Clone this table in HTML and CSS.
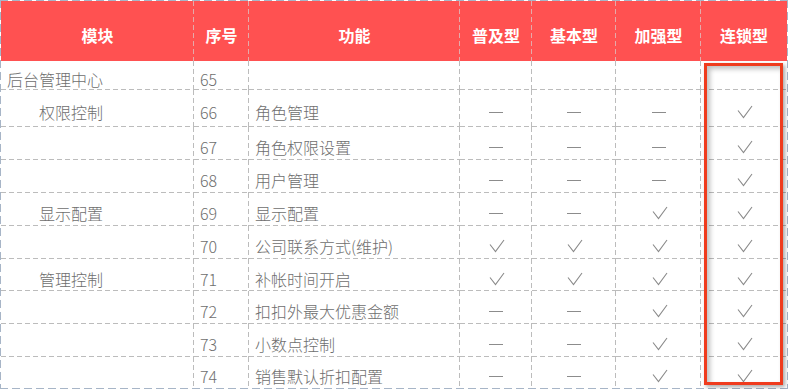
FILE: index.html
```html
<!DOCTYPE html>
<html lang="zh-CN">
<head>
<meta charset="utf-8">
<title>功能对比</title>
<link rel="stylesheet" href="styles.css">
</head>
<body>
<div class="frame">
  <div class="grid">
    <div class="c th">模块</div>
    <div class="c th">序号</div>
    <div class="c th">功能</div>
    <div class="c th">普及型</div>
    <div class="c th">基本型</div>
    <div class="c th">加强型</div>
    <div class="c th last-col">连锁型</div>

    <div class="c">后台管理中心</div>
    <div class="c">65</div>
    <div class="c"></div>
    <div class="c mid"></div>
    <div class="c mid"></div>
    <div class="c mid"></div>
    <div class="c mid last-col"></div>

    <div class="c sub">权限控制</div>
    <div class="c">66</div>
    <div class="c">角色管理</div>
    <div class="c mid"><span class="no"></span></div>
    <div class="c mid"><span class="no"></span></div>
    <div class="c mid"><span class="no"></span></div>
    <div class="c mid last-col"><svg class="ok" viewBox="0 0 16 14"><polyline points="1,5.5 6.5,12.5 15,1"/></svg></div>

    <div class="c sub"></div>
    <div class="c">67</div>
    <div class="c">角色权限设置</div>
    <div class="c mid"><span class="no"></span></div>
    <div class="c mid"><span class="no"></span></div>
    <div class="c mid"><span class="no"></span></div>
    <div class="c mid last-col"><svg class="ok" viewBox="0 0 16 14"><polyline points="1,5.5 6.5,12.5 15,1"/></svg></div>

    <div class="c sub"></div>
    <div class="c">68</div>
    <div class="c">用户管理</div>
    <div class="c mid"><span class="no"></span></div>
    <div class="c mid"><span class="no"></span></div>
    <div class="c mid"><span class="no"></span></div>
    <div class="c mid last-col"><svg class="ok" viewBox="0 0 16 14"><polyline points="1,5.5 6.5,12.5 15,1"/></svg></div>

    <div class="c sub">显示配置</div>
    <div class="c">69</div>
    <div class="c">显示配置</div>
    <div class="c mid"><span class="no"></span></div>
    <div class="c mid"><span class="no"></span></div>
    <div class="c mid"><svg class="ok" viewBox="0 0 16 14"><polyline points="1,5.5 6.5,12.5 15,1"/></svg></div>
    <div class="c mid last-col"><svg class="ok" viewBox="0 0 16 14"><polyline points="1,5.5 6.5,12.5 15,1"/></svg></div>

    <div class="c sub"></div>
    <div class="c">70</div>
    <div class="c">公司联系方式(维护)</div>
    <div class="c mid"><svg class="ok" viewBox="0 0 16 14"><polyline points="1,5.5 6.5,12.5 15,1"/></svg></div>
    <div class="c mid"><svg class="ok" viewBox="0 0 16 14"><polyline points="1,5.5 6.5,12.5 15,1"/></svg></div>
    <div class="c mid"><svg class="ok" viewBox="0 0 16 14"><polyline points="1,5.5 6.5,12.5 15,1"/></svg></div>
    <div class="c mid last-col"><svg class="ok" viewBox="0 0 16 14"><polyline points="1,5.5 6.5,12.5 15,1"/></svg></div>

    <div class="c sub">管理控制</div>
    <div class="c">71</div>
    <div class="c">补帐时间开启</div>
    <div class="c mid"><svg class="ok" viewBox="0 0 16 14"><polyline points="1,5.5 6.5,12.5 15,1"/></svg></div>
    <div class="c mid"><svg class="ok" viewBox="0 0 16 14"><polyline points="1,5.5 6.5,12.5 15,1"/></svg></div>
    <div class="c mid"><svg class="ok" viewBox="0 0 16 14"><polyline points="1,5.5 6.5,12.5 15,1"/></svg></div>
    <div class="c mid last-col"><svg class="ok" viewBox="0 0 16 14"><polyline points="1,5.5 6.5,12.5 15,1"/></svg></div>

    <div class="c sub"></div>
    <div class="c">72</div>
    <div class="c">扣扣外最大优惠金额</div>
    <div class="c mid"><span class="no"></span></div>
    <div class="c mid"><span class="no"></span></div>
    <div class="c mid"><svg class="ok" viewBox="0 0 16 14"><polyline points="1,5.5 6.5,12.5 15,1"/></svg></div>
    <div class="c mid last-col"><svg class="ok" viewBox="0 0 16 14"><polyline points="1,5.5 6.5,12.5 15,1"/></svg></div>

    <div class="c sub"></div>
    <div class="c">73</div>
    <div class="c">小数点控制</div>
    <div class="c mid"><span class="no"></span></div>
    <div class="c mid"><span class="no"></span></div>
    <div class="c mid"><svg class="ok" viewBox="0 0 16 14"><polyline points="1,5.5 6.5,12.5 15,1"/></svg></div>
    <div class="c mid last-col"><svg class="ok" viewBox="0 0 16 14"><polyline points="1,5.5 6.5,12.5 15,1"/></svg></div>

    <div class="c sub last-row"></div>
    <div class="c last-row">74</div>
    <div class="c last-row">销售默认折扣配置</div>
    <div class="c mid last-row"><span class="no"></span></div>
    <div class="c mid last-row"><span class="no"></span></div>
    <div class="c mid last-row"><svg class="ok" viewBox="0 0 16 14"><polyline points="1,5.5 6.5,12.5 15,1"/></svg></div>
    <div class="c mid last-row last-col"><svg class="ok" viewBox="0 0 16 14"><polyline points="1,5.5 6.5,12.5 15,1"/></svg></div>
  </div>
  <div class="highlight"></div>
</div>
</body>
</html>
```

FILE: styles.css
```css
html, body {
  margin: 0;
  padding: 0;
  background: #fff;
}

.frame {
  position: relative;
  width: 786px;
  padding: 1px;
  background:
    repeating-linear-gradient(90deg, #a7b5c7 0 8px, transparent 8px 12px) left top / 100% 1px no-repeat,
    repeating-linear-gradient(90deg, #a7b5c7 0 8px, transparent 8px 12px) left bottom / 100% 1px no-repeat,
    repeating-linear-gradient(180deg, #a7b5c7 0 8px, transparent 8px 12px) left top / 1px 100% no-repeat,
    repeating-linear-gradient(180deg, #a7b5c7 0 8px, transparent 8px 12px) right top / 1px 100% no-repeat;
}

.grid {
  display: grid;
  grid-template-columns: 193px 55px 211px 72px 84px 85px 86px;
  grid-template-rows: 60px 29px 37px 33px 33px 33px 33px 32px 33px 33px 31px;
  background: #fff;
  font-family: "Noto Sans CJK SC", "Noto Sans", sans-serif;
  font-size: 16px;
  font-weight: 300;
  color: #6e6e6e;
}

.c {
  box-sizing: border-box;
  display: flex;
  align-items: center;
  padding: 7px 0 0 6px;
  white-space: nowrap;
  line-height: 1;
  background-image:
    repeating-linear-gradient(90deg, #bcbcbc 0 5px, transparent 5px 8px),
    repeating-linear-gradient(180deg, #bcbcbc 0 5px, transparent 5px 8px);
  background-position: left bottom, right top;
  background-size: 100% 1px, 1px 100%;
  background-repeat: no-repeat;
}

.c.last-col {
  background-size: 100% 1px, 0 0;
}

.c.last-row {
  background-size: 0 0, 1px 100%;
}

.c.last-row.last-col {
  background-size: 0 0, 0 0;
}

.c.sub {
  padding-left: 38px;
}

.c.mid {
  justify-content: center;
  padding-left: 0;
}

.c.th {
  justify-content: center;
  padding-left: 0;
  background-color: #ff5151;
  background-image:
    repeating-linear-gradient(90deg, transparent 0 1px),
    repeating-linear-gradient(180deg, #e5a9a9 0 5px, transparent 5px 8px);
  color: #fff;
  font-weight: 700;
}

.no {
  display: block;
  width: 14px;
  height: 1px;
  background: #8c8c8c;
}

.ok {
  display: block;
  width: 16px;
  height: 14px;
  margin-left: 2px;
  fill: none;
  stroke: #8a8a8a;
  stroke-width: 1.1;
}

.highlight {
  position: absolute;
  left: 704px;
  top: 63px;
  width: 79px;
  height: 322px;
  box-sizing: border-box;
  border: 3px solid #ef3b1d;
  box-shadow: 2px 2px 4px rgba(0, 0, 0, 0.35), inset 3px 3px 5px rgba(0, 0, 0, 0.25);
  pointer-events: none;
}
```
